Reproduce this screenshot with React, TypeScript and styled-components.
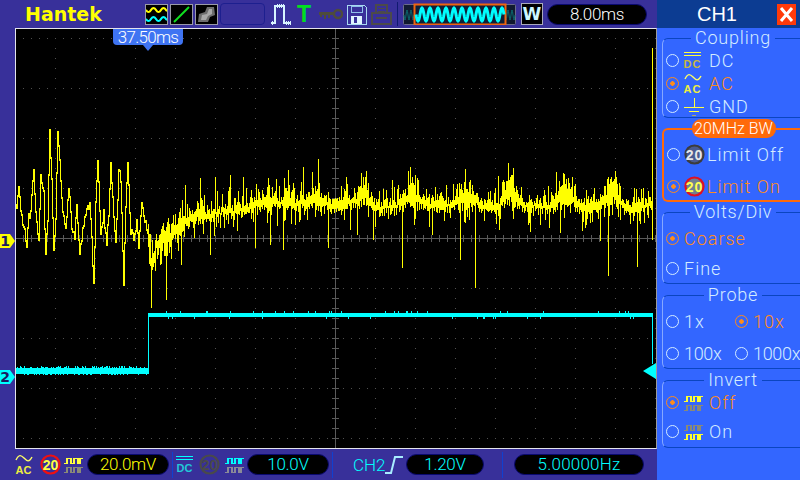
import type { ReactNode } from "react";
import styled, { createGlobalStyle } from "styled-components";

const PURPLE = "#38309a";
const PANEL = "#3366ff";
const LIGHT = "#d4ecff";
const ORANGE = "#ff8c1a";
const YELLOW = "#ffff00";
const CYAN = "#00ffff";

const GlobalStyle = createGlobalStyle`
  html, body { margin: 0; padding: 0; background: ${PURPLE}; }
  body { font-family: Roboto, "Liberation Sans", Arial, sans-serif; font-weight: 300; }
`;

// small seeded generator so the noise stays the same on every run
const makeRandom = (seed: number) => () => {
  seed = (seed + 0x6d2b79f5) | 0;
  let t = Math.imul(seed ^ (seed >>> 15), 1 | seed);
  t = (t + Math.imul(t ^ (t >>> 7), 61 | t)) ^ t;
  return ((t ^ (t >>> 14)) >>> 0) / 4294967296;
};

const LEFT_TRACE = [
  [16, 205], [18, 186], [20, 208], [23, 228], [26, 244], [28, 215], [30, 212], [33, 168], [35, 214], [38, 243],
  [40, 178], [43, 195], [45, 257], [47, 220], [49, 130], [51, 182], [53, 250], [55, 222], [57, 130], [60, 178],
  [62, 214], [65, 232], [68, 188], [71, 226], [74, 236], [76, 208], [79, 250], [82, 230], [85, 214], [89, 202],
  [91, 240], [93, 284], [95, 205], [97, 160], [100, 232], [103, 214], [106, 245], [108, 212], [110, 165], [113, 216],
  [115, 245], [118, 172], [120, 178], [123, 282], [125, 205], [127, 166], [130, 230], [133, 240], [136, 222], [138, 245],
  [141, 206], [144, 218], [147, 232],
];

const BAND = [
  [148, 236], [150, 262], [153, 262], [156, 246], [160, 240], [170, 234], [180, 226], [190, 218], [200, 217], [220, 212],
  [240, 210], [255, 205], [270, 200], [300, 205], [318, 196], [330, 206], [350, 204], [363, 192], [378, 208], [395, 206],
  [412, 197], [430, 206], [450, 205], [467, 194], [485, 207], [498, 206], [510, 190], [525, 206], [550, 206], [565, 190],
  [580, 207], [598, 206], [613, 190], [625, 208], [652, 206],
];

const SPIKES: Record<number, number> = {
  151: 308, 166: 300, 181: 265, 185: 185, 200: 178, 210: 255, 215: 177, 230: 175, 243: 177, 255: 248,
  270: 245, 283: 250, 288: 170, 303: 167, 318: 159, 328: 248, 346: 177, 357: 235, 373: 240, 392: 180,
  402: 268, 410: 167, 432: 235, 460: 260, 465: 169, 475: 288, 498: 176, 512: 175, 530: 232, 556: 172,
  560: 233, 600: 241, 608: 276, 615: 171, 637: 267, 648: 191,
};

const lerp = (points: number[][], x: number) => {
  for (let i = 1; i < points.length; i++) {
    if (x <= points[i][0]) {
      const [x0, y0] = points[i - 1];
      const [x1, y1] = points[i];
      return y0 + ((y1 - y0) * (x - x0)) / (x1 - x0);
    }
  }
  return points[points.length - 1][1];
};

const buildYellow = () => {
  const rnd = makeRandom(41);
  let d = "";
  let prev = 205;
  for (let x = 16; x < 148; x++) {
    const y = lerp(LEFT_TRACE, x) + (rnd() - 0.5) * 9;
    d += `M${x + 0.5} ${Math.round(Math.min(prev, y) - 1)}V${Math.round(Math.max(prev, y) + 1)}`;
    prev = y;
  }
  for (let x = 148; x < 652; x++) {
    const centre = lerp(BAND, x) + (rnd() - 0.5) * 6;
    const amp = x < 185 ? 11 : centre < 199 ? 13 : 6;
    let top = centre - (0.3 + rnd()) * amp;
    let bottom = centre + (0.3 + rnd()) * amp;
    // many columns carry a short excursion, that is what makes the band look spiky
    if (rnd() > 0.7) top -= 3 + rnd() * 14;
    if (rnd() > 0.78) bottom += 3 + rnd() * 15;
    const spike = SPIKES[x];
    if (spike) {
      if (spike < centre) top = spike;
      else bottom = spike;
    }
    d += `M${x + 0.5} ${Math.round(top)}V${Math.round(bottom)}`;
  }
  return d + "M652.5 48V240";
};

const buildCyan = () => {
  const rnd = makeRandom(7);
  let d = "";
  for (let x = 16; x < 148; x++) {
    const top = rnd() > 0.6 ? 366 + Math.floor(rnd() * 2) : 368;
    const bottom = rnd() > 0.75 ? 375 : 374;
    d += `M${x + 0.5} ${top}V${bottom}`;
  }
  d += "M148.5 374V313";
  for (let x = 149; x < 653; x++) {
    const top = rnd() > 0.94 ? 311 : 313;
    const bottom = rnd() > 0.96 ? 319 : 317;
    d += `M${x + 0.5} ${top}V${bottom}`;
  }
  return d + "M652.5 316V364";
};

const buildGrid = () => {
  let dots = "";
  for (let row = 38; row <= 438; row += 50) {
    if (row === 238) continue;
    for (let x = 23; x < 656; x += 8) dots += `M${x} ${row}h1v1h-1z`;
  }
  for (let col = 55; col < 656; col += 40) {
    if (col === 335) continue;
    for (let y = 48; y < 448; y += 10) dots += `M${col} ${y}h1v1h-1z`;
  }
  let axis = "M16 238.5H656M335.5 29V448";
  for (let x = 23; x < 656; x += 8) axis += `M${x + 0.5} 235V242`;
  for (let y = 38; y < 448; y += 10) axis += `M332 ${y + 0.5}H339`;
  return { dots, axis };
};

const grid = buildGrid();
const yellowPath = buildYellow();
const cyanPath = buildCyan();

const sineThumb = (x0: number, x1: number, period: number, top: number, bottom: number) => {
  let d = `M${x0} ${(top + bottom) / 2}`;
  for (let x = x0; x <= x1; x += 0.5) {
    d += `L${x} ${((top + bottom) / 2 + (Math.sin(((x - x0) / period) * Math.PI * 2) * (bottom - top)) / 2).toFixed(1)}`;
  }
  return d;
};

const Root = styled.div`
  width: 800px;
  height: 480px;
  display: flex;
  overflow: hidden;
  background: ${PURPLE};
`;

const LeftColumn = styled.div`
  width: 657px;
  display: flex;
  flex-direction: column;
`;

const TopBar = styled.div`
  height: 28px;
  display: flex;
  align-items: center;
`;

const Logo = styled.div`
  width: 120px;
  margin-left: 25px;
  color: ${YELLOW};
  font: bold 19px "DejaVu Sans", sans-serif;
  line-height: 28px;
`;

const ToolBox = styled.div`
  width: 23px;
  height: 21px;
  box-sizing: border-box;
  margin-right: 2px;
  border: 1px solid #9a9aa8;
  background: #000;
  svg { display: block; }
`;

const EmptyBox = styled.div`
  width: 45px;
  height: 22px;
  box-sizing: border-box;
  border: 1px solid #1d1f8f;
  border-radius: 4px;
  margin-right: 5px;
`;

const IconSlot = styled.span<{ $ml?: number }>`
  display: block;
  flex: none;
  margin-left: ${(p) => p.$ml ?? 0}px;
  svg { display: block; }
`;

const TriggerT = styled.span`
  width: 14px;
  margin-left: 5px;
  color: #00e020;
  font: bold 23px "Liberation Sans", sans-serif;
  text-align: center;
`;

const BarDivider = styled.div<{ $ml: number; $color?: string; $height?: number }>`
  width: 1px;
  height: ${(p) => p.$height ?? 24}px;
  margin-left: ${(p) => p.$ml}px;
  flex: none;
  background: ${(p) => p.$color ?? "#101a70"};
`;

const ModeBox = styled.div`
  width: 22px;
  height: 22px;
  box-sizing: border-box;
  margin-left: 5px;
  border: 1px solid #aab;
  background: #000;
  color: #cdf6ff;
  font: bold 17px "DejaVu Sans", sans-serif;
  line-height: 20px;
  text-align: center;
`;

const Pill = styled.div<{ $width: number; $color: string; $ml: number; $ls?: number }>`
  flex: none;
  width: ${(p) => p.$width}px;
  height: 21px;
  box-sizing: border-box;
  margin-left: ${(p) => p.$ml}px;
  background: #000;
  border: 1px solid #0a0a70;
  border-radius: 11px;
  color: ${(p) => p.$color};
  font-size: 17px;
  letter-spacing: ${(p) => p.$ls ?? -0.3}px;
  line-height: 19px;
  text-align: center;
`;

const ScopeRow = styled.div`
  height: 421px;
  padding-left: 15px;
`;

const Screen = styled.div`
  position: relative;
  width: 642px;
  height: 421px;
  box-sizing: border-box;
  border: 1px solid #e4e4ec;
  border-right-color: #9a9a9a;
  background: #000;
  svg { display: block; }
`;

const TimeFlag = styled.div`
  position: absolute;
  left: 97px;
  top: 0;
  width: 70px;
  height: 16px;
  background: #3f74f2;
  border-radius: 0 0 4px 4px;
  color: #fff;
  font-size: 17px;
  letter-spacing: -0.7px;
  line-height: 16px;
  text-align: center;

  &::after {
    content: "";
    position: absolute;
    left: 30px;
    top: 16px;
    border: 5px solid transparent;
    border-top: 6px solid #3f74f2;
    border-bottom: 0;
  }
`;

const ChannelMark = styled.div<{ $top: number; $color: string }>`
  position: absolute;
  left: -16px;
  top: ${(p) => p.$top}px;
  width: 10px;
  height: 14px;
  background: ${(p) => p.$color};
  color: #1a1a60;
  font: bold 14px/14px "DejaVu Sans", sans-serif;
  text-align: center;

  &::after {
    content: "";
    position: absolute;
    left: 10px;
    top: 0;
    border-left: 5px solid ${(p) => p.$color};
    border-top: 7px solid transparent;
    border-bottom: 7px solid transparent;
  }
`;

const LevelArrow = styled.div`
  position: absolute;
  right: 0;
  top: 334px;
  border-right: 13px solid ${CYAN};
  border-top: 8px solid transparent;
  border-bottom: 8px solid transparent;
`;

const BottomBar = styled.div`
  height: 31px;
  display: flex;
  align-items: center;
`;

const SourceLabel = styled.span`
  width: 32px;
  margin-left: 20px;
  color: ${CYAN};
  font-size: 17px;
`;

const Panel = styled.div`
  width: 143px;
  height: 480px;
  background: ${PANEL};
`;

const PanelHeader = styled.div`
  height: 28px;
  display: flex;
  align-items: center;
  background: #0c3c92;
`;

const PanelTitle = styled.div`
  width: 120px;
  color: #fff;
  font: 400 20px "Liberation Sans", sans-serif;
  text-align: center;
`;

const CloseButton = styled.div`
  width: 19px;
  height: 21px;
  background: #ff3a0a;
  svg { display: block; }
`;

const Group = styled.fieldset<{ $height: number; $mt: number; $orange?: boolean; $pad: number }>`
  height: ${(p) => p.$height}px;
  box-sizing: border-box;
  margin: ${(p) => p.$mt}px 0 0 5px;
  padding: ${(p) => p.$pad}px 0 0 3px;
  min-width: 0;
  border: ${(p) => (p.$orange ? 2 : 1)}px solid ${(p) => (p.$orange ? "#ff6a0a" : "#0b45c0")};
  border-right: none;
  border-left-color: ${(p) => (p.$orange ? "#ff6a0a" : "#86a8ff")};
  border-radius: 6px 0 0 6px;
`;

const GroupTitle = styled.legend`
  margin: 0 auto;
  padding: 0 4px;
  height: 16px;
  color: ${LIGHT};
  font-size: 18px;
  line-height: 15px;
  letter-spacing: 0.8px;
`;

const PillTitle = styled.legend`
  margin: 0 auto;
  padding: 0;
  width: 84px;
  height: 19px;
  background: #ff6a0a;
  border-radius: 9px;
  color: #fff;
  font-size: 16px;
  line-height: 19px;
  text-align: center;
`;

const Row = styled.div<{ $height: number }>`
  height: ${(p) => p.$height}px;
  display: flex;
  align-items: center;
`;

const Choice = styled.div<{ $on?: boolean; $width?: number }>`
  display: flex;
  align-items: center;
  flex: none;
  width: ${(p) => (p.$width ? `${p.$width}px` : "auto")};
  color: ${(p) => (p.$on ? ORANGE : LIGHT)};
  font-size: 18px;
  letter-spacing: 1px;
`;

const Radio = styled.span<{ $on?: boolean }>`
  width: 13px;
  height: 13px;
  box-sizing: border-box;
  flex: none;
  margin-right: 5px;
  border: 1px solid ${(p) => (p.$on ? ORANGE : LIGHT)};
  border-radius: 50%;
  background: radial-gradient(circle, ${(p) => (p.$on ? ORANGE : "transparent")} 0 2px, transparent 2.5px);
`;

const GlyphSlot = styled.span`
  width: 25px;
  flex: none;
  svg { display: block; }
`;

const BadgeGlyphSlot = styled(GlyphSlot)`
  width: 23px;
  margin-left: -1px;
`;

const Tight = styled.span`
  letter-spacing: -0.3px;
`;

const IconDC = ({ bar, text }: { bar: string; text: string }) => (
  <svg width="18" height="22" viewBox="0 0 18 22">
    <path d="M0 2.5H17M0 5.5H17" stroke={bar} fill="none" />
    <text x="8.5" y="18" textAnchor="middle" fontSize="11" fontWeight="bold" fill={text} fontFamily="Liberation Sans">DC</text>
  </svg>
);

const IconAC = () => (
  <svg width="18" height="22" viewBox="0 0 18 22">
    <path d="M1 6C4 0 6 1 9 4S14 9 17 3" stroke="#ffff66" strokeWidth="1.4" fill="none" />
    <text x="8.5" y="20" textAnchor="middle" fontSize="11" fontWeight="bold" fill="#eeee40" fontFamily="Liberation Sans">AC</text>
  </svg>
);

const IconGround = () => (
  <svg width="20" height="20" viewBox="0 0 20 20" shapeRendering="crispEdges">
    <path d="M10 1V10M0 10.5H20M5 14.5H15" stroke="#ffff40" fill="none" />
    <path d="M8 18.5H12" stroke="#b0a860" fill="none" />
  </svg>
);

const Badge = ({ ring, text, fill = "none" }: { ring: string; text: string; fill?: string }) => (
  <svg width="21" height="21" viewBox="0 0 21 21">
    <circle cx="10.5" cy="10.5" r="9" stroke={ring} strokeWidth="2.2" fill={fill} />
    <text x="10.5" y="15.5" textAnchor="middle" fontSize="14" fontWeight="bold" fill={text} fontFamily="Liberation Sans">20</text>
  </svg>
);

const SquareWaves = ({ first, second }: { first: string; second: string }) => (
  <svg width="19" height="18" viewBox="0 0 19 18" shapeRendering="crispEdges" fill="none" strokeWidth="1.6">
    <path d="M0 7.5H3V2.5H7V7.5H10V2.5H14V7.5H16V2.5H19" stroke={first} />
    <path d="M0 16.5H3V11.5H7V16.5H10V11.5H14V16.5H16V11.5H19" stroke={second} />
  </svg>
);

const Option = ({ on, glyph, width, children }: { on?: boolean; glyph?: ReactNode; width?: number; children: ReactNode }) => (
  <Choice $on={on} $width={width}>
    <Radio $on={on} />
    {glyph}
    {children}
  </Choice>
);

export default function App() {
  return (
    <Root>
      <GlobalStyle />
      <LeftColumn>
        <TopBar>
          <Logo>Hantek</Logo>
          <ToolBox>
            <svg width="21" height="19" fill="none" strokeWidth="2">
              <path d={sineThumb(0, 21, 10, 3, 7)} stroke={YELLOW} />
              <path d={sineThumb(0, 21, 10, 12, 16)} stroke={CYAN} />
            </svg>
          </ToolBox>
          <ToolBox>
            <svg width="21" height="19"><path d="M3 17L18 2" stroke="#10e020" strokeWidth="2" /></svg>
          </ToolBox>
          <ToolBox>
            <svg width="21" height="19">
              <path d="M2 17L3 9L9 7L11 2H18L19 10L14 12L12 17Z" fill="#6e6e6e" />
              <path d="M5 15L6 10L11 9L13 4H16L16 9L12 11L10 15Z" fill="#a8a8a8" />
            </svg>
          </ToolBox>
          <EmptyBox />
          <IconSlot>
            <svg width="22" height="22" viewBox="0 0 22 22" fill="none" stroke="#d8f4ff" strokeWidth="1.6" shapeRendering="crispEdges">
              <path d="M1 20H5V3H14V20H21" />
              <path d="M7 1V5M9 1V5M11 1V5M13 1V5M16 18V23M18 18V23M20 18V23M2 18V23" strokeWidth="1" />
            </svg>
          </IconSlot>
          <TriggerT>T</TriggerT>
          <IconSlot $ml={8}>
            <svg width="24" height="14" viewBox="0 0 24 14" fill="#4e4c3c">
              <circle cx="19" cy="7" r="4" fill="none" stroke="#4e4c3c" strokeWidth="2.4" />
              <path d="M0 5H15V8H11V11H9V8H7V12H5V8H3V10H1V8H0Z" />
            </svg>
          </IconSlot>
          <IconSlot $ml={3}>
            <svg width="21" height="21" viewBox="0 0 21 21" shapeRendering="crispEdges">
              <path d="M1 1H18L20 3V20H1Z" fill="#38309a" stroke="#a8d8f0" />
              <rect x="5" y="2" width="11" height="6" fill="none" stroke="#8fc0ea" />
              <rect x="5" y="12" width="11" height="8" fill="#dff4ff" />
              <rect x="8" y="13" width="3" height="6" fill="#38309a" />
            </svg>
          </IconSlot>
          <IconSlot $ml={4}>
            <svg width="21" height="21" viewBox="0 0 21 21" fill="none" stroke="#4c4a4a" strokeWidth="2" shapeRendering="crispEdges">
              <path d="M5 9V1H16V9" />
              <path d="M7 4H14M7 7H14" strokeWidth="1" />
              <path d="M1 9H20V20H1Z" />
              <path d="M5 14H16" />
            </svg>
          </IconSlot>
          <BarDivider $ml={5} />
          <IconSlot $ml={5}>
            <svg width="113" height="22" viewBox="0 0 113 22">
              <rect x="0.5" y="1.5" width="112" height="20" rx="1" fill="#111a30" stroke="#6a6a88" />
              <path d={sineThumb(1, 11, 4, 7, 17)} stroke="#0a6a70" fill="none" />
              <path d={sineThumb(102, 112, 4, 7, 17)} stroke="#0a6a70" fill="none" />
              <rect x="11.5" y="1.5" width="91" height="20" fill="#102038" stroke="#f0640f" strokeWidth="2" />
              <path d={sineThumb(13, 101, 8, 5, 18)} stroke={CYAN} strokeWidth="3" fill="none" />
            </svg>
          </IconSlot>
          <ModeBox>W</ModeBox>
          <Pill $width={100} $color="#fff" $ml={4}>8.00ms</Pill>
        </TopBar>
        <ScopeRow>
          <Screen>
            <svg width="640" height="419" viewBox="16 29 640 419">
              <path d={grid.dots} fill="#505050" />
              <path d={grid.axis} stroke="#5a5a5a" fill="none" />
              <path d={yellowPath} stroke={YELLOW} fill="none" shapeRendering="crispEdges" />
              <path d={cyanPath} stroke={CYAN} fill="none" shapeRendering="crispEdges" />
            </svg>
            <TimeFlag>37.50ms</TimeFlag>
            <ChannelMark $top={205} $color={YELLOW}>1</ChannelMark>
            <ChannelMark $top={341} $color={CYAN}>2</ChannelMark>
            <LevelArrow />
          </Screen>
        </ScopeRow>
        <BottomBar>
          <IconSlot $ml={15}><IconAC /></IconSlot>
          <IconSlot $ml={7}><Badge ring="#f01010" text="#ffff40" /></IconSlot>
          <IconSlot $ml={3}><SquareWaves first="#ffff40" second="#8a8a78" /></IconSlot>
          <Pill $width={82} $color={YELLOW} $ml={4}>20.0mV</Pill>
          <BarDivider $ml={3} $height={26} $color="#1040d0" />
          <IconSlot $ml={3}><IconDC bar={CYAN} text="#22c8d8" /></IconSlot>
          <IconSlot $ml={5}><Badge ring="#4a4a4a" text="#4a4a4a" /></IconSlot>
          <IconSlot $ml={5}><SquareWaves first={CYAN} second="#8a8a98" /></IconSlot>
          <Pill $width={82} $color={CYAN} $ml={3}>10.0V</Pill>
          <BarDivider $ml={3} $height={26} $color="#1040d0" />
          <SourceLabel>CH2</SourceLabel>
          <IconSlot>
            <svg width="18" height="20" viewBox="0 0 18 20" fill="none" stroke="#a8ecff" strokeWidth="2">
              <path d="M0 18H6L10 2H18" />
            </svg>
          </IconSlot>
          <Pill $width={78} $color={CYAN} $ml={3}>1.20V</Pill>
          <BarDivider $ml={18} $height={26} $color="#1040d0" />
          <Pill $width={130} $color={CYAN} $ml={11} $ls={0.2}>5.00000Hz</Pill>
        </BottomBar>
      </LeftColumn>

      <Panel>
        <PanelHeader>
          <PanelTitle>CH1</PanelTitle>
          <CloseButton>
            <svg width="19" height="21" viewBox="0 0 19 21">
              <path d="M4 4L15 17M15 4L4 17" stroke="#fff" strokeWidth="3" />
            </svg>
          </CloseButton>
        </PanelHeader>

        <Group $height={88} $mt={2} $pad={3}>
          <GroupTitle>Coupling</GroupTitle>
          <Row $height={23}>
            <Option glyph={<GlyphSlot><IconDC bar="#ffff40" text="#c8b840" /></GlyphSlot>}>DC</Option>
          </Row>
          <Row $height={23}>
            <Option on glyph={<GlyphSlot><IconAC /></GlyphSlot>}>AC</Option>
          </Row>
          <Row $height={23}>
            <Option glyph={<GlyphSlot><IconGround /></GlyphSlot>}>GND</Option>
          </Row>
        </Group>

        <Group $height={83} $mt={1} $orange $pad={0}>
          <PillTitle>20MHz BW</PillTitle>
          <Row $height={32}>
            <Option glyph={<BadgeGlyphSlot><Badge ring="#3c3c3c" text="#e8e8e8" fill="#4a5a90" /></BadgeGlyphSlot>}>
              Limit Off
            </Option>
          </Row>
          <Row $height={32}>
            <Option on glyph={<BadgeGlyphSlot><Badge ring="#e01020" text="#ffff50" fill="#708090" /></BadgeGlyphSlot>}>
              Limit On
            </Option>
          </Row>
        </Group>

        <Group $height={80} $mt={2} $pad={3}>
          <GroupTitle>Volts/Div</GroupTitle>
          <Row $height={30}>
            <Option on>Coarse</Option>
          </Row>
          <Row $height={30}>
            <Option>Fine</Option>
          </Row>
        </Group>

        <Group $height={82} $mt={3} $pad={2}>
          <GroupTitle>Probe</GroupTitle>
          <Row $height={32}>
            <Option width={69}>1x</Option>
            <Option on>10x</Option>
          </Row>
          <Row $height={32}>
            <Option width={69}><Tight>100x</Tight></Option>
            <Option><Tight>1000x</Tight></Option>
          </Row>
        </Group>

        <Group $height={76} $mt={3} $pad={0}>
          <GroupTitle>Invert</GroupTitle>
          <Row $height={29}>
            <Option on glyph={<GlyphSlot><SquareWaves first="#ffff30" second="#8a8a78" /></GlyphSlot>}>Off</Option>
          </Row>
          <Row $height={29}>
            <Option glyph={<GlyphSlot><SquareWaves first="#8a8a78" second="#ffff30" /></GlyphSlot>}>On</Option>
          </Row>
        </Group>
      </Panel>
    </Root>
  );
}
